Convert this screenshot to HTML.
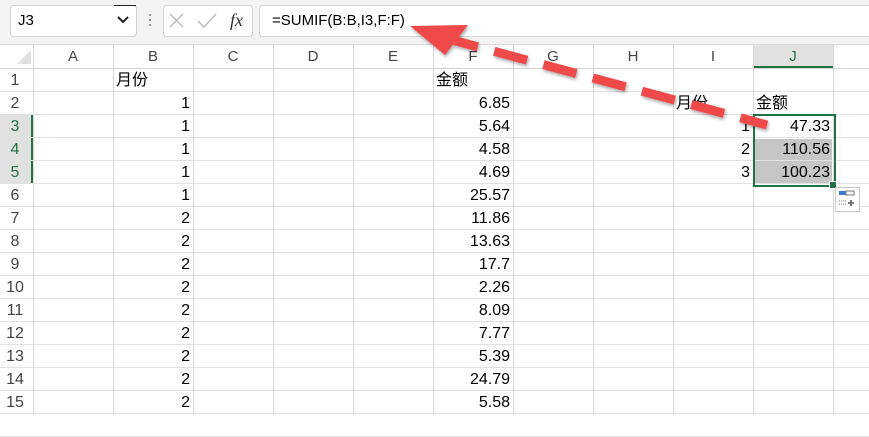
<!DOCTYPE html>
<html><head><meta charset="utf-8"><style>
body{margin:0;width:869px;height:415px;overflow:hidden;background:#fff;font-family:"Liberation Sans","Noto Sans CJK SC",sans-serif;position:relative}
.a{position:absolute}
.t{position:absolute;font-size:15px;color:#000;line-height:23px;white-space:nowrap}
</style></head><body>
<div class="a" style="left:0;top:0;width:869px;height:44px;background:#f3f3f3;border-bottom:1px solid #dcdcdc"></div>
<div class="a" style="left:10px;top:5px;width:125px;height:30px;background:#fff;border:1px solid #d4d4d4;border-radius:4px"></div>
<div class="t" style="left:18px;top:9px;font-size:15px">J3</div>
<svg class="a" style="left:117px;top:16px" width="12" height="8"><path d="M1 1 L6 6 L11 1" stroke="#222" stroke-width="2" fill="none"/></svg>
<div class="a" style="left:114px;top:5px;width:22px;height:1px;background:#222"></div>
<div class="a" style="left:149px;top:14px;width:2px;height:2px;background:#999;box-shadow:0 5px #999,0 10px #999"></div>
<div class="a" style="left:163px;top:5px;width:88px;height:30px;background:#fff;border:1px solid #d4d4d4;border-radius:4px"></div>
<svg class="a" style="left:168px;top:12px" width="80" height="18"><path d="M2 2 L15 15 M15 2 L2 15" stroke="#bbb" stroke-width="1.5"/><path d="M30 9 L36 15 L48 2" stroke="#bbb" stroke-width="1.5" fill="none"/><text x="62" y="14" font-family="Liberation Serif" font-style="italic" font-size="18" fill="#333">fx</text></svg>
<div class="a" style="left:259px;top:5px;width:615px;height:30px;background:#fff;border:1px solid #d4d4d4;border-radius:4px"></div>
<div class="t" style="left:272px;top:9px">=SUMIF(B:B,I3,F:F)</div>
<div class="a" style="left:0;top:45px;width:869px;height:23px;background:#fff;border-bottom:1px solid #d4d4d4"></div>
<div class="a" style="left:754px;top:45px;width:80px;height:21px;background:#e1e1e1;border-bottom:2px solid #217346"></div>
<div class="a" style="left:0;top:68px;width:33px;height:347px;border-right:1px solid #d4d4d4"></div>
<div class="a" style="left:0;top:115px;width:33px;height:69px;background:#e1e1e1;border-right:2px solid #217346;box-sizing:border-box"></div>
<svg class="a" style="left:17px;top:50px" width="14" height="14"><path d="M14 0 L14 14 L0 14Z" fill="#e0e0e0"/></svg>
<div class="a" style="left:755px;top:139px;width:77px;height:45px;background:#c6c6c6"></div>
<div id="g"></div>
<div class="a" style="left:753px;top:114px;width:79px;height:69px;border:2px solid #217346"></div>
<div class="a" style="left:829px;top:181px;width:6px;height:6px;background:#217346;border:1px solid #fff"></div>
<div class="a" style="left:835px;top:187px;width:23px;height:23px;border:1px solid #c8c8c8;background:#fff"></div>
<svg class="a" style="left:838px;top:190px" width="18" height="18"><rect x="1" y="1" width="7" height="4" fill="#3c78d8"/><rect x="8" y="1" width="8" height="4" fill="none" stroke="#777"/><path d="M1 11 H8 M1 14 H8" stroke="#777" stroke-dasharray="1 1"/><path d="M13 10 V16 M10 13 H16" stroke="#777" stroke-width="2"/></svg>
<script>
var h='',cols=['A','B','C','D','E','F','G','H','I','J'];
for(var i=0;i<=10;i++){var x=33+80*i;h+='<div class="a" style="left:'+(x)+'px;top:45px;width:1px;height:370px;background:#d9d9d9"></div>';}
for(var i=0;i<10;i++){h+='<div class="t" style="left:'+(33+80*i)+'px;top:45px;width:80px;text-align:center;color:'+(i==9?'#217346':'#444')+'">'+cols[i]+'</div>';}
for(var r=0;r<16;r++){var y=68+23*r;h+='<div class="a" style="left:0;top:'+(y+23)+'px;width:869px;height:1px;background:#e1e1e1"></div>';if(r<15)h+='<div class="t" style="left:0;top:'+(y+1)+'px;width:30px;text-align:center;font-size:16px;color:'+(r>=2&&r<=4?'#217346':'#444')+'">'+(r+1)+'</div>';}
var B=[1,1,1,1,1,2,2,2,2,2,2,2,2,2],F=['6.85','5.64','4.58','4.69','25.57','11.86','13.63','17.7','2.26','8.09','7.77','5.39','24.79','5.58'];
function cell(c,r,t,al){var x=33+80*c;h+='<div class="t" style="font-size:16px;left:'+(x+3)+'px;top:'+(68+23*r+1)+'px;width:74px;text-align:'+al+'">'+t+'</div>';}
cell(1,0,'月份','left');cell(5,0,'金额','left');
for(var r=0;r<14;r++){cell(1,r+1,B[r],'right');cell(5,r+1,F[r],'right');}
cell(8,1,'月份','left');cell(9,1,'金额','left');
cell(8,2,'1','right');cell(8,3,'2','right');cell(8,4,'3','right');
cell(9,2,'47.33','right');cell(9,3,'110.56','right');cell(9,4,'100.23','right');
document.getElementById('g').innerHTML=h;
</script>
<svg class="a" style="left:0;top:0" width="869" height="415">
<defs><filter id="s"><feDropShadow dx="1" dy="2" stdDeviation="1.5" flood-opacity="0.35"/></filter></defs>
<g filter="url(#s)">
<path d="M445 38 L767 125" stroke="#f04a4a" stroke-width="9" stroke-dasharray="34 17" fill="none"/>
<path d="M410 26 L468 25 L445 55 Z" fill="#f04a4a"/>
</g>
</svg>
</body></html>
